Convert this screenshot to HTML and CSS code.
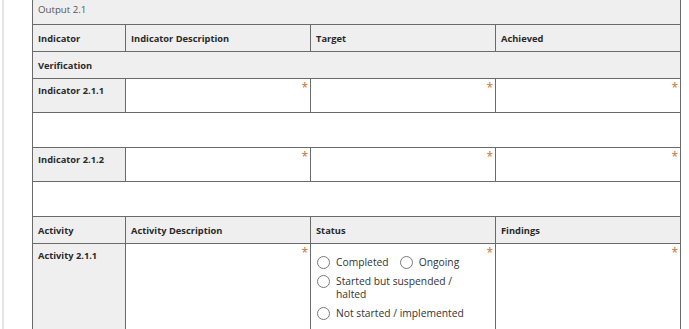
FILE: index.html
```html
<!DOCTYPE html>
<html lang="en">
<head>
    <meta charset="UTF-8">
    <meta name="viewport" content="width=device-width, initial-scale=1.0">
    <title>Output 2.1</title>
    <link rel="stylesheet" href="styles.css">
</head>
<body>
    <div class="page">
        <table class="report">
            <colgroup>
                <col class="col-label">
                <col class="col-wide">
                <col class="col-wide">
                <col class="col-wide">
            </colgroup>
            <tr class="row-title">
                <td colspan="4" class="title">Output 2.1</td>
            </tr>
            <tr class="row-head">
                <th>Indicator</th>
                <th>Indicator Description</th>
                <th>Target</th>
                <th>Achieved</th>
            </tr>
            <tr class="row-head">
                <th colspan="4">Verification</th>
            </tr>
            <tr class="row-input">
                <th class="label">Indicator 2.1.1</th>
                <td class="field"><span class="req">*</span></td>
                <td class="field"><span class="req">*</span></td>
                <td class="field"><span class="req">*</span></td>
            </tr>
            <tr class="row-blank">
                <td colspan="4"></td>
            </tr>
            <tr class="row-input">
                <th class="label">Indicator 2.1.2</th>
                <td class="field"><span class="req">*</span></td>
                <td class="field"><span class="req">*</span></td>
                <td class="field"><span class="req">*</span></td>
            </tr>
            <tr class="row-blank">
                <td colspan="4"></td>
            </tr>
            <tr class="row-head">
                <th>Activity</th>
                <th>Activity Description</th>
                <th>Status</th>
                <th>Findings</th>
            </tr>
            <tr class="row-activity">
                <th class="label">Activity 2.1.1</th>
                <td class="field"><span class="req">*</span></td>
                <td class="field status">
                    <span class="req">*</span>
                    <div class="options">
                        <label class="option"><input type="radio" name="status"><span>Completed</span></label>
                        <label class="option"><input type="radio" name="status"><span>Ongoing</span></label>
                        <label class="option"><input type="radio" name="status"><span>Started but suspended / halted</span></label>
                        <label class="option"><input type="radio" name="status"><span>Not started / implemented</span></label>
                    </div>
                </td>
                <td class="field"><span class="req">*</span></td>
            </tr>
        </table>
    </div>
</body>
</html>
```

FILE: styles.css
```css
body {
    margin: 0;
    background-color: #ffffff;
    font-family: "Open Sans", "Liberation Sans", sans-serif;
    font-size: 10px;
    color: #333333;
    overflow: hidden;
}

.page {
    margin-left: 2px;
    border-left: 2px solid #e4e4e4;
    padding-left: 28px;
    margin-top: -3px;
    height: 340px;
}

.report {
    border-collapse: collapse;
    width: 649px;
    table-layout: fixed;
}

.col-label {
    width: 93px;
}

.col-wide {
    width: 185px;
}

.report td,
.report th {
    border: 1px solid #6a6a6a;
    padding: 0 5px;
    text-align: left;
    vertical-align: middle;
}

.report th {
    font-weight: 700;
    font-size: 9.3px;
    color: #2a2a2a;
    background-color: #efefef;
}

.row-title td {
    background-color: #efefef;
    color: #555555;
    font-size: 9.7px;
    height: 23px;
    padding-bottom: 3px;
}

.row-head th {
    height: 26px;
}

.row-input th,
.row-input td {
    height: 28px;
}

.row-blank td {
    height: 34px;
}

.row-activity th,
.row-activity td {
    height: 81px;
}

.report .label {
    vertical-align: top;
    padding-top: 5px;
}

.field {
    position: relative;
    background-color: #ffffff;
}

.req {
    position: absolute;
    top: 3px;
    right: 2px;
    color: #c8722f;
    font-size: 12px;
    line-height: 12px;
}

.report .status {
    vertical-align: top;
    padding: 12px 22px 0 6px;
}

.options {
    display: flex;
    flex-wrap: wrap;
    column-gap: 11px;
    row-gap: 6px;
}

.option {
    display: flex;
    align-items: flex-start;
    gap: 6px;
    line-height: 13px;
    font-size: 10.3px;
}

.option input {
    appearance: none;
    margin: 0;
    flex: none;
    width: 13px;
    height: 13px;
    border: 1px solid #7a7a7a;
    border-radius: 50%;
    background-color: #ffffff;
}
```
